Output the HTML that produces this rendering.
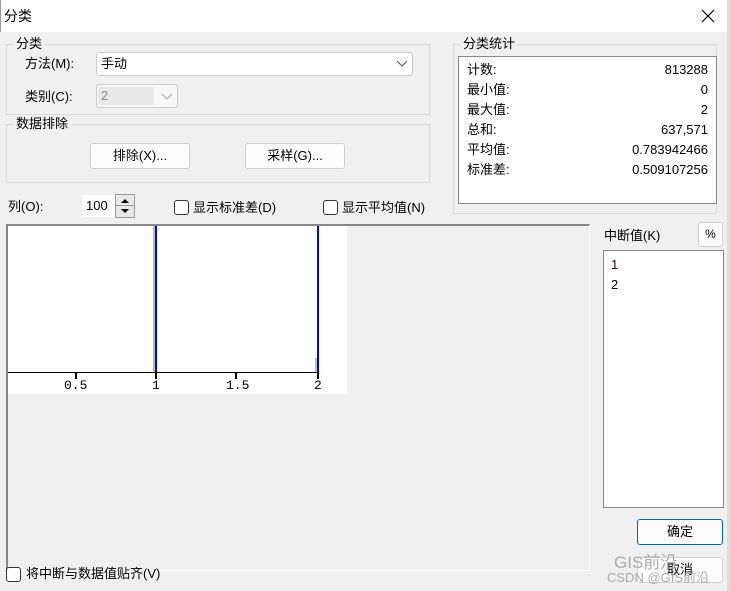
<!DOCTYPE html>
<html><head><meta charset="utf-8"><style>
*{box-sizing:border-box;margin:0;padding:0}
body{width:730px;height:591px;overflow:hidden;background:#f0f0f0;font-family:"Liberation Sans","Noto Sans CJK SC",sans-serif;font-size:13px;color:#000;position:relative}
.a{position:absolute;white-space:nowrap}
.grp{position:absolute;border:1px solid #dcdcdc}
.lg{position:absolute;background:#f0f0f0;padding:0 3px;font-size:13px;line-height:14px}
.btn{position:absolute;background:#fdfdfd;border:1px solid #d0d0d0;border-radius:3px;text-align:center;font-size:13px}
.cb{position:absolute;width:15px;height:15px;border:1px solid #333;border-radius:3px;background:#fff}
.t{line-height:16px}
</style></head><body>
<div class="a" style="left:0;top:0;width:730px;height:32px;background:#fff;border-left:1px solid #999"></div>
<div class="a t" style="left:4px;top:8px;font-size:14px">分类</div>
<svg class="a" style="left:701px;top:9px" width="14" height="14"><path d="M1 1L13 13M13 1L1 13" stroke="#000" stroke-width="1.2"/></svg>
<div class="a" style="left:727px;top:0;width:3px;height:591px;background:#ddd"></div>

<div class="grp" style="left:6px;top:44px;width:424px;height:71px"></div>
<div class="lg" style="left:13px;top:37px">分类</div>
<div class="a t" style="left:25px;top:56px">方法(M):</div>
<div class="a" style="left:96px;top:52px;width:317px;height:24px;background:#fff;border:1px solid #ccc;border-radius:3px;padding:2px 4px;line-height:18px">手动</div>
<svg class="a" style="left:396px;top:60px" width="12" height="8"><path d="M1 1L6 6L11 1" stroke="#555" fill="none"/></svg>
<div class="a t" style="left:25px;top:89px">类别(C):</div>
<div class="a" style="left:96px;top:84px;width:82px;height:24px;background:#f8f8f8;border:1px solid #ccc;border-radius:3px"></div>
<div class="a" style="left:98px;top:87px;width:56px;height:18px;background:#e8e8e8;color:#888;padding-left:3px;line-height:18px">2</div>
<svg class="a" style="left:161px;top:93px" width="12" height="8"><path d="M1 1L6 6L11 1" stroke="#aaa" fill="none"/></svg>

<div class="grp" style="left:6px;top:124px;width:424px;height:59px"></div>
<div class="lg" style="left:13px;top:117px">数据排除</div>
<div class="btn" style="left:90px;top:143px;width:100px;height:26px;line-height:24px">排除(X)...</div>
<div class="btn" style="left:245px;top:143px;width:100px;height:26px;line-height:24px">采样(G)...</div>

<div class="grp" style="left:453px;top:44px;width:264px;height:170px"></div>
<div class="lg" style="left:460px;top:37px">分类统计</div>
<div class="a" style="left:458px;top:56px;width:259px;height:148px;background:#fff;border:1px solid #888"></div>
<div class="a" style="left:467px;top:60px;line-height:20px">计数:<br>最小值:<br>最大值:<br>总和:<br>平均值:<br>标准差:</div>
<div class="a" style="left:560px;width:148px;top:60px;line-height:20px;text-align:right">813288<br>0<br>2<br>637,571<br>0.783942466<br>0.509107256</div>

<div class="a t" style="left:8px;top:199px">列(O):</div>
<div class="a" style="left:82px;top:195px;width:33px;height:22px;background:#fff;padding:3px 4px;line-height:16px">100</div>
<div class="a" style="left:115px;top:194px;width:20px;height:24px;border:1px solid #999;background:#e8e8e8"></div>
<div class="a" style="left:116px;top:205px;width:18px;height:1px;background:#999"></div>
<svg class="a" style="left:119px;top:197px" width="12" height="18"><path d="M2 6L6 2L10 6Z M2 12L10 12L6 16Z" fill="#000"/></svg>
<div class="cb" style="left:174px;top:200px"></div>
<div class="a t" style="left:193px;top:200px">显示标准差(D)</div>
<div class="cb" style="left:323px;top:200px"></div>
<div class="a t" style="left:342px;top:200px">显示平均值(N)</div>

<div class="a" style="left:6px;top:224px;width:584px;height:347px;border-top:2px solid #888;border-left:2px solid #888;border-right:1px solid #fff;border-bottom:1px solid #fff"></div>
<div class="a" style="left:8px;top:226px;width:339px;height:168px;background:#fff"></div>
<div class="a" style="left:153px;top:226px;width:2px;height:146px;background:#bbb"></div>
<div class="a" style="left:155px;top:226px;width:2px;height:146px;background:#00f"></div>
<div class="a" style="left:315px;top:358px;width:2px;height:14px;background:#bbb"></div>
<div class="a" style="left:317px;top:226px;width:2px;height:146px;background:#00f"></div>
<div class="a" style="left:8px;top:372px;width:311px;height:1px;background:#000"></div>
<div class="a" style="left:75px;top:372px;width:2px;height:7px;background:#000"></div>
<div class="a" style="left:155px;top:372px;width:2px;height:7px;background:#000"></div>
<div class="a" style="left:235px;top:372px;width:2px;height:7px;background:#000"></div>
<div class="a" style="left:317px;top:372px;width:2px;height:7px;background:#000"></div>
<div class="a" style="font-family:'Liberation Mono',monospace;font-size:13px;left:64px;top:378px">0.5</div>
<div class="a" style="font-family:'Liberation Mono',monospace;font-size:13px;left:152px;top:378px">1</div>
<div class="a" style="font-family:'Liberation Mono',monospace;font-size:13px;left:226px;top:378px">1.5</div>
<div class="a" style="font-family:'Liberation Mono',monospace;font-size:13px;left:314px;top:378px">2</div>

<div class="a t" style="left:604px;top:228px">中断值(K)</div>
<div class="btn" style="left:698px;top:222px;width:25px;height:25px;line-height:23px;font-size:12px">%</div>
<div class="a" style="left:603px;top:250px;width:121px;height:258px;background:#fff;border:1px solid #888"></div>
<div class="a" style="left:611px;top:255px;line-height:20px;color:#400">1<br><span style="color:#000">2</span></div>

<div class="btn" style="left:637px;top:519px;width:86px;height:26px;line-height:24px;border:1px solid #0067c0">确定</div>
<div class="btn" style="left:637px;top:557px;width:86px;height:26px;line-height:24px">取消</div>
<div class="a" style="left:614px;top:548px;color:#aaa;font-size:17px">GIS前沿</div>
<div class="a" style="left:607px;top:567px;color:#aaa;font-size:13px">CSDN @GIS前沿</div>

<div class="cb" style="left:6px;top:567px"></div>
<div class="a t" style="left:26px;top:566px">将中断与数据值贴齐(V)</div>
</body></html>
